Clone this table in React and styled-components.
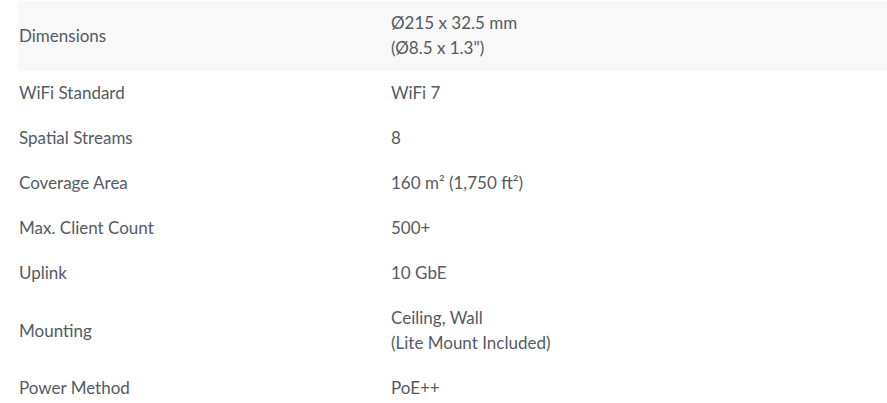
import React from "react";
import styled, { createGlobalStyle } from "styled-components";

const GlobalStyle = createGlobalStyle`
  html, body {
    margin: 0;
    padding: 0;
    background: #ffffff;
  }
  body {
    font-family: Lato, "Noto Sans", sans-serif;
    -webkit-font-smoothing: antialiased;
  }
`;

const SpecTable = styled.div`
  margin: 1px 0 0 18px;
  width: 869px;
  display: flex;
  flex-direction: column;
`;

const Row = styled.div`
  display: grid;
  grid-template-columns: 373px 1fr;
  align-items: center;
  padding: 9px 0 11px;
  background: ${(props) => (props.$shaded ? "#f8f8f8" : "transparent")};
  font-size: 17px;
  font-weight: 400;
  line-height: 25px;
  color: #555b63;
`;

const Label = styled.div`
  padding-left: 1px;
`;

const Value = styled.div`
  white-space: pre-line;
`;

const specs = [
  ["Dimensions", "Ø215 x 32.5 mm\n(Ø8.5 x 1.3\")"],
  ["WiFi Standard", "WiFi 7"],
  ["Spatial Streams", "8"],
  ["Coverage Area", "160 m² (1,750 ft²)"],
  ["Max. Client Count", "500+"],
  ["Uplink", "10 GbE"],
  ["Mounting", "Ceiling, Wall\n(Lite Mount Included)"],
  ["Power Method", "PoE++"],
];

const App = () => {
  return (
    <>
      <GlobalStyle />
      <SpecTable>
        {specs.map(([label, value], i) => (
          <Row key={label} $shaded={i === 0}>
            <Label>{label}</Label>
            <Value>{value}</Value>
          </Row>
        ))}
      </SpecTable>
    </>
  );
};

export default App;
